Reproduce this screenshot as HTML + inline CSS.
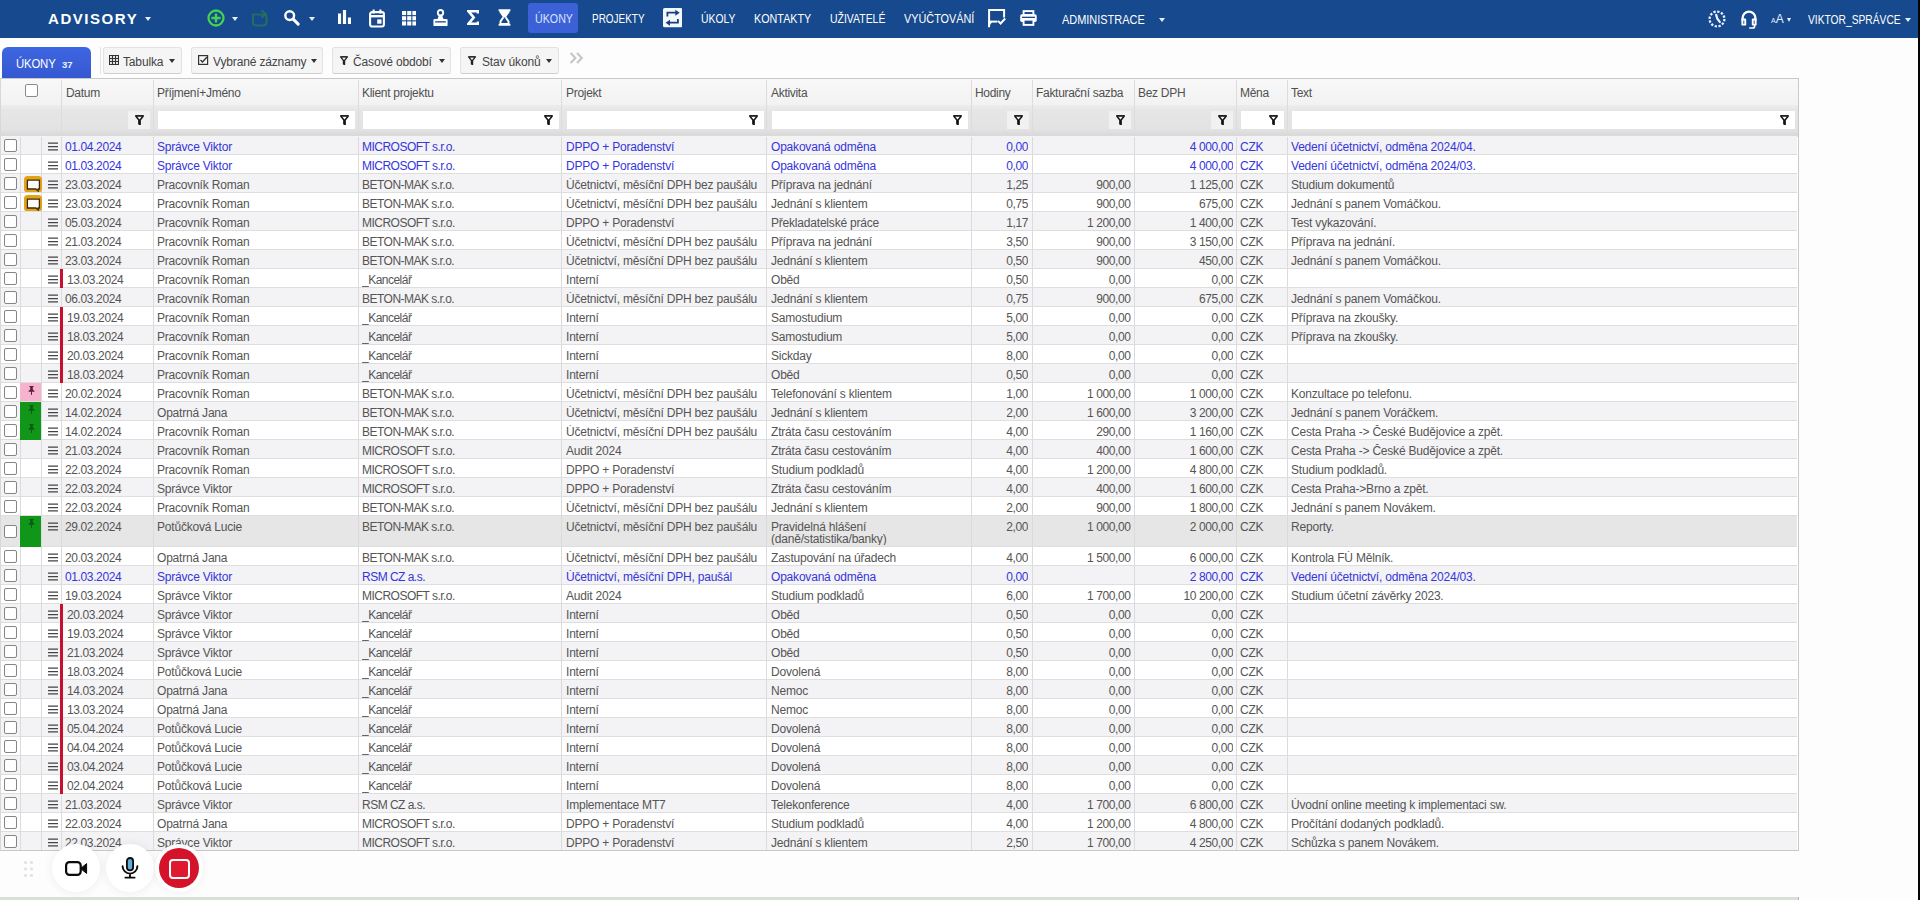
<!DOCTYPE html>
<html lang="cs"><head><meta charset="utf-8"><title>ÚKONY</title>
<style>
*{box-sizing:border-box;margin:0;padding:0}
html,body{width:1920px;height:900px;overflow:hidden;background:#fefdfe;font-family:"Liberation Sans",sans-serif;color:#444}
i{font-style:normal;display:block}
#nav{position:absolute;left:0;top:0;width:1918px;height:38px;background:#16498d}
#edge{position:absolute;left:1917.5px;top:0;width:2.5px;height:900px;background:#050505}
.nt{position:absolute;top:11px;color:#fff;font-size:13px;line-height:15px;white-space:nowrap;transform-origin:0 0;display:block}
.car{position:absolute;width:0;height:0;border-left:3px solid transparent;border-right:3px solid transparent;border-top:4px solid #e8eefa;top:17px}
.ic{position:absolute}
#brand{position:absolute;left:48px;top:10px;color:#fff;font-weight:bold;font-size:15px;line-height:18px;letter-spacing:1.55px}
#act{position:absolute;left:528px;top:3px;width:50px;height:30px;background:#3c61d6;border-radius:3px}
/* toolbar */
#tab{position:absolute;left:2px;top:47px;width:89px;height:32px;border-radius:6px 6px 0 0;background:linear-gradient(#3d66e0,#3558d2);color:#fff}
#tab b{position:absolute;left:13.5px;top:10px;font-weight:normal;font-size:12.5px;line-height:14px;letter-spacing:-.2px;transform:scaleX(.91);transform-origin:0 0}
#tab em{position:absolute;left:60px;top:12px;font-style:normal;font-weight:bold;font-size:9.5px;line-height:11px;color:#e6f4ff}
.btn{position:absolute;top:47px;height:27px;background:#f5f5f5;border:1px solid #e2e2e2;border-bottom-color:#cfcfcf;border-radius:3px;color:#444;font-size:12px;line-height:14px;white-space:nowrap}
.btn span{position:absolute;top:7px;letter-spacing:-.15px}
.btn .car{border-top-color:#333;top:11px}
.sep{position:absolute;top:47px;width:1px;height:27px;background:#e3e3e3}
/* grid */
#grid{position:absolute;left:0;top:78px;width:1799px;height:773px;border:1px solid #c9c9c9;border-left-color:#d8d8d8;background:#fff;overflow:hidden}
#hd1{position:absolute;left:0;top:0;width:1799px;height:26px;background:linear-gradient(#f8f8f8,#f2f2f2)}
#hd2{position:absolute;left:0;top:26px;width:1799px;height:32px;background:linear-gradient(#ededed 0,#e6e6e6 5px,#e3e3e3 24px,#d9d9d9 30px,#dedede 32px)}
.h{position:absolute;top:7px;font-size:12px;line-height:14px;color:#505050;white-space:nowrap;letter-spacing:-.3px}
.hs{position:absolute;top:1px;width:1px;height:55px;background:#dcdcdc}
.fi{position:absolute;top:32px;height:18px;background:#fff}
.fb{position:absolute;top:32px;height:18px;background:#f1f1f1}
.fw{position:absolute;top:35.5px;width:9px;height:10px}
.fn{width:9px;height:10px;display:block}
.hcb{position:absolute;left:25px;top:5px;width:13px;height:13px;border:1px solid #8a8a8a;border-radius:2px;background:#fff}
#rows{position:absolute;left:0;top:0;width:1799px}
.r{position:absolute;left:0;width:1797px;border-bottom:1px solid #dedede;font-size:12px;line-height:14px;color:#555;background:#fff}
.r.odd{background:#f3f2f4}
.r.tall{background:#e6e6e6}
.r.bl{color:#3535dc}
.c{position:absolute;top:3.5px;white-space:nowrap;overflow:hidden;letter-spacing:-.2px}
.n{letter-spacing:-.38px}
.k{letter-spacing:-.52px}
.tall .c{white-space:normal;line-height:12px;top:4.5px}
.rt{text-align:right}
.cb{position:absolute;left:4px;width:13px;height:13px;border:1px solid #858585;border-radius:2px;background:#fff}
.mn{position:absolute;left:48px;top:6px;width:10px;height:9px;display:block}
.rb{position:absolute;left:60.3px;top:0;width:2.7px;background:#c90f2e;z-index:3}
.fl{position:absolute;left:20px;top:0;width:20.7px;overflow:hidden;z-index:2}
.pin{position:absolute;left:8px;top:2.5px;width:7px;height:9px}
.cm{position:absolute;left:24.2px;top:1.5px;width:18px;height:16.5px;z-index:2}
.vl{z-index:1;position:absolute;top:58px;width:1px;height:720px;background:#dbdbdd}
/* recorder */
.rc{position:absolute;border-radius:50%;background:#fff;box-shadow:0 0 9px 2px rgba(0,0,0,.05)}
#bot{position:absolute;left:0;top:896.5px;width:1799px;height:3.5px;background:#d8e1d8;border-right:1px solid #b9b9b9}
</style></head><body>
<div id="nav">
 <div id="brand">ADVISORY</div><i class="car" style="left:145px"></i>
 <div id="act"></div>
 
 <svg class="ic" style="left:206px;top:8px" width="20" height="20" viewBox="0 0 20 20"><circle cx="10" cy="10" r="7.5" fill="none" stroke="#45d152" stroke-width="2.3"/><path d="M10 5.4v9.2M5.4 10h9.2" stroke="#45d152" stroke-width="2.4"/></svg><i class="car" style="left:232px"></i>
 <svg class="ic" style="left:250px;top:9px;opacity:.62" width="20" height="18" viewBox="0 0 20 18"><path d="M3 5.5h10.5a3 3 0 0 1 3 3v5a3 3 0 0 1-3 3H6a3 3 0 0 1-3-3z" fill="none" stroke="#2d8448" stroke-width="2.2"/><path d="M11.5 1.4l4 3.6-4 3.6" fill="none" stroke="#2d8448" stroke-width="2.2"/></svg>
 <svg class="ic" style="left:283px;top:9px" width="17" height="17" viewBox="0 0 17 17"><circle cx="6.7" cy="6.6" r="4.4" fill="none" stroke="#fff" stroke-width="2.4"/><path d="M10.2 10.1l5 5" stroke="#fff" stroke-width="2.9" stroke-linecap="round"/></svg><i class="car" style="left:309px"></i>
 <svg class="ic" style="left:338px;top:10.4px" width="13" height="14" viewBox="0 0 13 14"><path d="M0 3.6h3.1V14H0zM4.9 0h3.2v14H4.9zM9.9 7.4H13V14H9.9z" fill="#fff"/></svg>
 <svg class="ic" style="left:368.5px;top:8.6px" width="16" height="19" viewBox="0 0 16 19"><rect x="1.1" y="3.1" width="13.8" height="14.4" rx="2" fill="none" stroke="#fff" stroke-width="2.1"/><path d="M1 7.2h14" stroke="#fff" stroke-width="2.4"/><path d="M4.6 .6v4M11.4 .6v4" stroke="#fff" stroke-width="2.1"/><rect x="8.2" y="10.4" width="4.3" height="4.3" fill="#fff"/></svg>
 <svg class="ic" style="left:401.5px;top:11px" width="14.5" height="14.5" viewBox="0 0 14.5 14.5"><g fill="#fff"><rect x="0" y="0" width="4.1" height="4.1"/><rect x="5.2" y="0" width="4.1" height="4.1"/><rect x="10.4" y="0" width="4.1" height="4.1"/><rect x="0" y="5.2" width="4.1" height="4.1"/><rect x="5.2" y="5.2" width="4.1" height="4.1"/><rect x="10.4" y="5.2" width="4.1" height="4.1"/><rect x="0" y="10.4" width="4.1" height="4.1"/><rect x="5.2" y="10.4" width="4.1" height="4.1"/><rect x="10.4" y="10.4" width="4.1" height="4.1"/></g></svg>
 <svg class="ic" style="left:433px;top:9.2px" width="15" height="17.5" viewBox="0 0 15 17.5"><circle cx="7.5" cy="3.7" r="2.7" fill="none" stroke="#fff" stroke-width="1.9"/><path d="M5.9 6.4L4.4 10.2h6.2L9.1 6.4z" fill="#fff"/><rect x="0.4" y="9.9" width="14.2" height="7.2" rx="1.2" fill="#fff"/><rect x="2.2" y="12.2" width="10.6" height="1.3" fill="#16498d"/></svg>
 <svg class="ic" style="left:466.5px;top:10px" width="12" height="15" viewBox="0 0 12 15"><path d="M11 3.4V1.3H1.6L6.7 7.5 1.6 13.7H11v-2.1" fill="none" stroke="#fff" stroke-width="2.6" stroke-linejoin="miter"/></svg>
 <svg class="ic" style="left:498px;top:9.4px" width="13" height="17" viewBox="0 0 13 17"><path d="M0.6 0.2h11.8v2H0.6zM0.6 14.8h11.8v2H0.6z" fill="#fff"/><path d="M1.6 2h9.8v1.6L7.8 8.5h-2.6L1.6 3.6z" fill="#fff"/><path d="M5.4 8.3L2.5 12.4V15h8v-2.6L7.6 8.3" fill="none" stroke="#fff" stroke-width="1.9"/></svg>
 <svg class="ic" style="left:663.1px;top:8.4px" width="19.3" height="19.3" viewBox="0 0 19.3 19.3"><rect x="0" y="0" width="19.3" height="19.3" rx="1.6" fill="#f3f8fd"/><path d="M4.4 8.4V4.7H13" fill="none" stroke="#1c3f7c" stroke-width="1.8"/><path d="M12.3 1.7l4.4 3-4.4 3z" fill="#1c3f7c"/><path d="M14.9 11V14.7H6.3" fill="none" stroke="#1c3f7c" stroke-width="1.8"/><path d="M7 11.7l-4.4 3 4.4 3z" fill="#1c3f7c"/></svg>
 <svg class="ic" style="left:987px;top:8px" width="20" height="21" viewBox="0 0 20 21"><path d="M2.1 19.2V2.1H17.1V9.6" fill="none" stroke="#fff" stroke-width="2"/><path d="M1.1 13.6H10.4" stroke="#fff" stroke-width="2"/><path d="M1.1 13.2h4.6L1.1 19.6z" fill="#fff"/><path d="M11 12.8l2.6 2.7 4.6-5" fill="none" stroke="#fff" stroke-width="1.9"/></svg>
 <svg class="ic" style="left:1020px;top:9.8px" width="17" height="16" viewBox="0 0 17 16"><rect x="3.6" y="1.1" width="9.8" height="4" fill="none" stroke="#fff" stroke-width="1.9"/><rect x="0.2" y="4.3" width="16.5" height="7.7" rx="1.7" fill="#fff"/><rect x="2" y="6.7" width="13" height="1.3" fill="#1a4685"/><rect x="3.6" y="9.7" width="9.8" height="5.2" fill="#1a4685" stroke="#fff" stroke-width="1.9"/></svg>
 <svg class="ic" style="left:1707.4px;top:9px" width="20" height="20" viewBox="0 0 20 20"><circle cx="10" cy="10" r="7.4" fill="none" stroke="#eaf3ff" stroke-width="2.3" stroke-dasharray="2.3 1.574"/><path d="M9.2 5.8Q9.6 10 12.8 13" fill="none" stroke="#eaf3ff" stroke-width="2.3" stroke-linecap="round"/></svg>
 <svg class="ic" style="left:1741px;top:9.6px" width="16" height="19" viewBox="0 0 16 19"><path d="M1.6 11V8a6.4 6.4 0 0 1 12.8 0v3" fill="none" stroke="#fff" stroke-width="2.3"/><rect x="0.4" y="8.6" width="4.8" height="7" rx="1.2" fill="#fff"/><rect x="10.8" y="8.6" width="4.8" height="7" rx="1.2" fill="#fff"/><path d="M2.8 10.5v3.4M13.2 10.5v3.4" stroke="#2a5aa0" stroke-width="1"/><path d="M13.6 15v1.2a1.8 1.8 0 0 1-1.8 1.8H8.2" fill="none" stroke="#fff" stroke-width="1.7"/></svg>

 <span class="nt" style="left:535.0px;top:11px;color:#d9e4ff;transform:scaleX(0.8220)">ÚKONY</span>
 <span class="nt" style="left:592.0px;top:11px;color:#fff;transform:scaleX(0.7663)">PROJEKTY</span>
 <span class="nt" style="left:700.8px;top:11px;color:#fff;transform:scaleX(0.7979)">ÚKOLY</span>
 <span class="nt" style="left:753.7px;top:11px;color:#fff;transform:scaleX(0.8291)">KONTAKTY</span>
 <span class="nt" style="left:829.8px;top:11px;color:#fff;transform:scaleX(0.8044)">UŽIVATELÉ</span>
 <span class="nt" style="left:904.0px;top:11px;color:#fff;transform:scaleX(0.8352)">VYÚČTOVÁNÍ</span>
 <span class="nt" style="left:1061.6px;top:12px;color:#fff;transform:scaleX(0.8419)">ADMINISTRACE</span>
 <span class="nt" style="left:1808.0px;top:12px;color:#fff;transform:scaleX(0.7887)">VIKTOR_SPRÁVCE</span>
 <i class="car" style="left:1159px;top:18px"></i>
 <span class="nt" style="left:1771px;font-size:12px;top:12px;color:#e8eefc"><span style="font-size:7px">A</span>A</span><i class="car" style="left:1787px;top:18px;border-left-width:2.5px;border-right-width:2.5px"></i>
<i class="car" style="left:1905px;top:18px"></i>
</div>
<div id="edge"></div>

<div id="tab"><b>ÚKONY</b><em>37</em></div>
<i class="sep" style="left:100px"></i>
<div class="btn" style="left:103px;width:79px"><svg class="ic" style="left:5px;top:7px" width="10" height="10" viewBox="0 0 10 10"><path d="M.5.5h9v9h-9zM.5 3.5h9M.5 6.5h9M3.5.5v9M6.5.5v9" fill="none" stroke="#333" stroke-width="1.2"/></svg><span style="left:19px">Tabulka</span><i class="car" style="left:65px"></i></div>
<div class="btn" style="left:191px;width:132px"><svg class="ic" style="left:6px;top:7px" width="11" height="10" viewBox="0 0 11 10"><rect x=".6" y=".6" width="9" height="8.8" fill="none" stroke="#333" stroke-width="1.2"/><path d="M2.5 5l2 2 4.5-5" fill="none" stroke="#333" stroke-width="1.4"/></svg><span style="left:21px">Vybrané záznamy</span><i class="car" style="left:119px"></i></div>
<div class="btn" style="left:332px;width:119px"><span class="ic" style="left:7px;top:8px;width:9px;height:9px"><svg width="8" height="9" viewBox="0 0 9 10" style="display:block"><path d="M0.2 0.9H8.8" stroke="#222" stroke-width="1.8"/><path d="M0.9 1.2L3.9 5V8.9L5.1 9.6V5L8.1 1.2" fill="none" stroke="#222" stroke-width="1.5"/><path d="M3.9 5h1.2v4H3.9z" fill="#222"/></svg></span><span style="left:20px">Časové období</span><i class="car" style="left:106px"></i></div>
<div class="btn" style="left:460px;width:99px"><span class="ic" style="left:7px;top:8px;width:9px;height:9px"><svg width="8" height="9" viewBox="0 0 9 10" style="display:block"><path d="M0.2 0.9H8.8" stroke="#222" stroke-width="1.8"/><path d="M0.9 1.2L3.9 5V8.9L5.1 9.6V5L8.1 1.2" fill="none" stroke="#222" stroke-width="1.5"/><path d="M3.9 5h1.2v4H3.9z" fill="#222"/></svg></span><span style="left:21px">Stav úkonů</span><i class="car" style="left:85px"></i></div>
<svg class="ic" style="left:569px;top:52px" width="15" height="12" viewBox="0 0 15 12"><path d="M1.6 1l4.8 5-4.8 5M8 1l4.8 5L8 11" fill="none" stroke="#c6c6c6" stroke-width="2.1"/></svg>

<div id="grid"><div style="position:absolute;left:-1px;top:-79px;width:1800px;height:900px">
 <div style="position:absolute;left:0;top:79px;width:1800px;height:58px">
  <div id="hd1"></div><div id="hd2"></div>
  <i class="hs" style="left:61px"></i><i class="hs" style="left:153px"></i><i class="hs" style="left:358px"></i><i class="hs" style="left:561px"></i><i class="hs" style="left:766px"></i><i class="hs" style="left:971px"></i><i class="hs" style="left:1032px"></i><i class="hs" style="left:1134px"></i><i class="hs" style="left:1236px"></i><i class="hs" style="left:1287px"></i>
  <i class="hcb"></i>
  <span class="h" style="left:66px">Datum</span><span class="h" style="left:157px">Příjmení+Jméno</span><span class="h" style="left:362px">Klient projektu</span><span class="h" style="left:566px">Projekt</span><span class="h" style="left:771px">Aktivita</span><span class="h" style="left:975px">Hodiny</span><span class="h" style="left:1036px">Fakturační sazba</span><span class="h" style="left:1138px">Bez DPH</span><span class="h" style="left:1240px">Měna</span><span class="h" style="left:1291px">Text</span>
  <i class="fb" style="left:128px;width:22px"></i><span class="fw" style="left:135px"><svg class="fn" viewBox="0 0 9 10"><path d="M0.2 0.9H8.8" stroke="#141414" stroke-width="1.7"/><path d="M0.9 1.2L3.9 5V8.9L5.1 9.6V5L8.1 1.2" fill="none" stroke="#141414" stroke-width="1.5" stroke-linejoin="miter"/><path d="M3.9 5h1.2v4H3.9z" fill="#141414"/></svg></span><i class="fi" style="left:158px;width:197px"></i><span class="fw" style="left:340px"><svg class="fn" viewBox="0 0 9 10"><path d="M0.2 0.9H8.8" stroke="#141414" stroke-width="1.7"/><path d="M0.9 1.2L3.9 5V8.9L5.1 9.6V5L8.1 1.2" fill="none" stroke="#141414" stroke-width="1.5" stroke-linejoin="miter"/><path d="M3.9 5h1.2v4H3.9z" fill="#141414"/></svg></span><i class="fi" style="left:363px;width:196px"></i><span class="fw" style="left:544px"><svg class="fn" viewBox="0 0 9 10"><path d="M0.2 0.9H8.8" stroke="#141414" stroke-width="1.7"/><path d="M0.9 1.2L3.9 5V8.9L5.1 9.6V5L8.1 1.2" fill="none" stroke="#141414" stroke-width="1.5" stroke-linejoin="miter"/><path d="M3.9 5h1.2v4H3.9z" fill="#141414"/></svg></span><i class="fi" style="left:567px;width:197px"></i><span class="fw" style="left:749px"><svg class="fn" viewBox="0 0 9 10"><path d="M0.2 0.9H8.8" stroke="#141414" stroke-width="1.7"/><path d="M0.9 1.2L3.9 5V8.9L5.1 9.6V5L8.1 1.2" fill="none" stroke="#141414" stroke-width="1.5" stroke-linejoin="miter"/><path d="M3.9 5h1.2v4H3.9z" fill="#141414"/></svg></span><i class="fi" style="left:772px;width:196px"></i><span class="fw" style="left:953px"><svg class="fn" viewBox="0 0 9 10"><path d="M0.2 0.9H8.8" stroke="#141414" stroke-width="1.7"/><path d="M0.9 1.2L3.9 5V8.9L5.1 9.6V5L8.1 1.2" fill="none" stroke="#141414" stroke-width="1.5" stroke-linejoin="miter"/><path d="M3.9 5h1.2v4H3.9z" fill="#141414"/></svg></span><i class="fb" style="left:1007px;width:22px"></i><span class="fw" style="left:1014px"><svg class="fn" viewBox="0 0 9 10"><path d="M0.2 0.9H8.8" stroke="#141414" stroke-width="1.7"/><path d="M0.9 1.2L3.9 5V8.9L5.1 9.6V5L8.1 1.2" fill="none" stroke="#141414" stroke-width="1.5" stroke-linejoin="miter"/><path d="M3.9 5h1.2v4H3.9z" fill="#141414"/></svg></span><i class="fb" style="left:1109px;width:22px"></i><span class="fw" style="left:1116px"><svg class="fn" viewBox="0 0 9 10"><path d="M0.2 0.9H8.8" stroke="#141414" stroke-width="1.7"/><path d="M0.9 1.2L3.9 5V8.9L5.1 9.6V5L8.1 1.2" fill="none" stroke="#141414" stroke-width="1.5" stroke-linejoin="miter"/><path d="M3.9 5h1.2v4H3.9z" fill="#141414"/></svg></span><i class="fb" style="left:1211px;width:22px"></i><span class="fw" style="left:1218px"><svg class="fn" viewBox="0 0 9 10"><path d="M0.2 0.9H8.8" stroke="#141414" stroke-width="1.7"/><path d="M0.9 1.2L3.9 5V8.9L5.1 9.6V5L8.1 1.2" fill="none" stroke="#141414" stroke-width="1.5" stroke-linejoin="miter"/><path d="M3.9 5h1.2v4H3.9z" fill="#141414"/></svg></span><i class="fi" style="left:1241px;width:43px"></i><span class="fw" style="left:1269px"><svg class="fn" viewBox="0 0 9 10"><path d="M0.2 0.9H8.8" stroke="#141414" stroke-width="1.7"/><path d="M0.9 1.2L3.9 5V8.9L5.1 9.6V5L8.1 1.2" fill="none" stroke="#141414" stroke-width="1.5" stroke-linejoin="miter"/><path d="M3.9 5h1.2v4H3.9z" fill="#141414"/></svg></span><i class="fi" style="left:1292px;width:503px"></i><span class="fw" style="left:1780px"><svg class="fn" viewBox="0 0 9 10"><path d="M0.2 0.9H8.8" stroke="#141414" stroke-width="1.7"/><path d="M0.9 1.2L3.9 5V8.9L5.1 9.6V5L8.1 1.2" fill="none" stroke="#141414" stroke-width="1.5" stroke-linejoin="miter"/><path d="M3.9 5h1.2v4H3.9z" fill="#141414"/></svg></span>
 </div>
 <div id="rows">
<div class="r bl odd" style="top:136px;height:19px"><i class="cb" style="top:3px"></i><svg class="mn" viewBox="0 0 10 9"><path d="M0 1.2h10M0 4.55h10M0 7.9h10" stroke="#444" stroke-width="1.3"/></svg><span class="c n" style="left:65px;width:86px">01.04.2024</span><span class="c" style="left:157px;width:199px">Správce Viktor</span><span class="c k" style="left:362px;width:198px">MICROSOFT s.r.o.</span><span class="c" style="left:566px;width:199px">DPPO + Poradenství</span><span class="c" style="left:771px;width:198px">Opakovaná odměna</span><span class="c rt n" style="left:971px;width:57px">0,00</span><span class="c rt n" style="left:1134px;width:99.4px">4 000,00</span><span class="c" style="left:1240px;width:45px">CZK</span><span class="c" style="left:1291px;width:505px">Vedení účetnictví, odměna 2024/04.</span></div>
<div class="r bl" style="top:155px;height:19px"><i class="cb" style="top:3px"></i><svg class="mn" viewBox="0 0 10 9"><path d="M0 1.2h10M0 4.55h10M0 7.9h10" stroke="#444" stroke-width="1.3"/></svg><span class="c n" style="left:65px;width:86px">01.03.2024</span><span class="c" style="left:157px;width:199px">Správce Viktor</span><span class="c k" style="left:362px;width:198px">MICROSOFT s.r.o.</span><span class="c" style="left:566px;width:199px">DPPO + Poradenství</span><span class="c" style="left:771px;width:198px">Opakovaná odměna</span><span class="c rt n" style="left:971px;width:57px">0,00</span><span class="c rt n" style="left:1134px;width:99.4px">4 000,00</span><span class="c" style="left:1240px;width:45px">CZK</span><span class="c" style="left:1291px;width:505px">Vedení účetnictví, odměna 2024/03.</span></div>
<div class="r odd" style="top:174px;height:19px"><i class="cb" style="top:3px"></i><svg class="cm" viewBox="0 0 18 16.5"><rect x="1.2" y="1.2" width="15.6" height="14.1" rx="2.4" fill="#e9a60f" stroke="#e4a216" stroke-width="2.4"/><path d="M3.4 4.1h12v8.9h-1.2v2l-2.3-2H3.4z" fill="#fdfdfd" stroke="#3a2c08" stroke-width="1.3" stroke-linejoin="miter"/></svg><svg class="mn" viewBox="0 0 10 9"><path d="M0 1.2h10M0 4.55h10M0 7.9h10" stroke="#444" stroke-width="1.3"/></svg><span class="c n" style="left:65px;width:86px">23.03.2024</span><span class="c" style="left:157px;width:199px">Pracovník Roman</span><span class="c k" style="left:362px;width:198px">BETON-MAK s.r.o.</span><span class="c" style="left:566px;width:199px">Účetnictví, měsíční DPH bez paušálu</span><span class="c" style="left:771px;width:198px">Příprava na jednání</span><span class="c rt n" style="left:971px;width:57px">1,25</span><span class="c rt n" style="left:1032px;width:98.6px">900,00</span><span class="c rt n" style="left:1134px;width:99.4px">1 125,00</span><span class="c" style="left:1240px;width:45px">CZK</span><span class="c" style="left:1291px;width:505px">Studium dokumentů</span></div>
<div class="r" style="top:193px;height:19px"><i class="cb" style="top:3px"></i><svg class="cm" viewBox="0 0 18 16.5"><rect x="1.2" y="1.2" width="15.6" height="14.1" rx="2.4" fill="#e9a60f" stroke="#e4a216" stroke-width="2.4"/><path d="M3.4 4.1h12v8.9h-1.2v2l-2.3-2H3.4z" fill="#fdfdfd" stroke="#3a2c08" stroke-width="1.3" stroke-linejoin="miter"/></svg><svg class="mn" viewBox="0 0 10 9"><path d="M0 1.2h10M0 4.55h10M0 7.9h10" stroke="#444" stroke-width="1.3"/></svg><span class="c n" style="left:65px;width:86px">23.03.2024</span><span class="c" style="left:157px;width:199px">Pracovník Roman</span><span class="c k" style="left:362px;width:198px">BETON-MAK s.r.o.</span><span class="c" style="left:566px;width:199px">Účetnictví, měsíční DPH bez paušálu</span><span class="c" style="left:771px;width:198px">Jednání s klientem</span><span class="c rt n" style="left:971px;width:57px">0,75</span><span class="c rt n" style="left:1032px;width:98.6px">900,00</span><span class="c rt n" style="left:1134px;width:99.4px">675,00</span><span class="c" style="left:1240px;width:45px">CZK</span><span class="c" style="left:1291px;width:505px">Jednání s panem Vomáčkou.</span></div>
<div class="r odd" style="top:212px;height:19px"><i class="cb" style="top:3px"></i><svg class="mn" viewBox="0 0 10 9"><path d="M0 1.2h10M0 4.55h10M0 7.9h10" stroke="#444" stroke-width="1.3"/></svg><span class="c n" style="left:65px;width:86px">05.03.2024</span><span class="c" style="left:157px;width:199px">Pracovník Roman</span><span class="c k" style="left:362px;width:198px">MICROSOFT s.r.o.</span><span class="c" style="left:566px;width:199px">DPPO + Poradenství</span><span class="c" style="left:771px;width:198px">Překladatelské práce</span><span class="c rt n" style="left:971px;width:57px">1,17</span><span class="c rt n" style="left:1032px;width:98.6px">1 200,00</span><span class="c rt n" style="left:1134px;width:99.4px">1 400,00</span><span class="c" style="left:1240px;width:45px">CZK</span><span class="c" style="left:1291px;width:505px">Test vykazování.</span></div>
<div class="r" style="top:231px;height:19px"><i class="cb" style="top:3px"></i><svg class="mn" viewBox="0 0 10 9"><path d="M0 1.2h10M0 4.55h10M0 7.9h10" stroke="#444" stroke-width="1.3"/></svg><span class="c n" style="left:65px;width:86px">21.03.2024</span><span class="c" style="left:157px;width:199px">Pracovník Roman</span><span class="c k" style="left:362px;width:198px">BETON-MAK s.r.o.</span><span class="c" style="left:566px;width:199px">Účetnictví, měsíční DPH bez paušálu</span><span class="c" style="left:771px;width:198px">Příprava na jednání</span><span class="c rt n" style="left:971px;width:57px">3,50</span><span class="c rt n" style="left:1032px;width:98.6px">900,00</span><span class="c rt n" style="left:1134px;width:99.4px">3 150,00</span><span class="c" style="left:1240px;width:45px">CZK</span><span class="c" style="left:1291px;width:505px">Příprava na jednání.</span></div>
<div class="r odd" style="top:250px;height:19px"><i class="cb" style="top:3px"></i><svg class="mn" viewBox="0 0 10 9"><path d="M0 1.2h10M0 4.55h10M0 7.9h10" stroke="#444" stroke-width="1.3"/></svg><span class="c n" style="left:65px;width:86px">23.03.2024</span><span class="c" style="left:157px;width:199px">Pracovník Roman</span><span class="c k" style="left:362px;width:198px">BETON-MAK s.r.o.</span><span class="c" style="left:566px;width:199px">Účetnictví, měsíční DPH bez paušálu</span><span class="c" style="left:771px;width:198px">Jednání s klientem</span><span class="c rt n" style="left:971px;width:57px">0,50</span><span class="c rt n" style="left:1032px;width:98.6px">900,00</span><span class="c rt n" style="left:1134px;width:99.4px">450,00</span><span class="c" style="left:1240px;width:45px">CZK</span><span class="c" style="left:1291px;width:505px">Jednání s panem Vomáčkou.</span></div>
<div class="r" style="top:269px;height:19px"><i class="cb" style="top:3px"></i><svg class="mn" viewBox="0 0 10 9"><path d="M0 1.2h10M0 4.55h10M0 7.9h10" stroke="#444" stroke-width="1.3"/></svg><span class="rb" style="height:19px"></span><span class="c n" style="left:67px;width:86px">13.03.2024</span><span class="c" style="left:157px;width:199px">Pracovník Roman</span><span class="c k" style="left:362px;width:198px">_Kancelář</span><span class="c" style="left:566px;width:199px">Interní</span><span class="c" style="left:771px;width:198px">Oběd</span><span class="c rt n" style="left:971px;width:57px">0,50</span><span class="c rt n" style="left:1032px;width:98.6px">0,00</span><span class="c rt n" style="left:1134px;width:99.4px">0,00</span><span class="c" style="left:1240px;width:45px">CZK</span></div>
<div class="r odd" style="top:288px;height:19px"><i class="cb" style="top:3px"></i><svg class="mn" viewBox="0 0 10 9"><path d="M0 1.2h10M0 4.55h10M0 7.9h10" stroke="#444" stroke-width="1.3"/></svg><span class="c n" style="left:65px;width:86px">06.03.2024</span><span class="c" style="left:157px;width:199px">Pracovník Roman</span><span class="c k" style="left:362px;width:198px">BETON-MAK s.r.o.</span><span class="c" style="left:566px;width:199px">Účetnictví, měsíční DPH bez paušálu</span><span class="c" style="left:771px;width:198px">Jednání s klientem</span><span class="c rt n" style="left:971px;width:57px">0,75</span><span class="c rt n" style="left:1032px;width:98.6px">900,00</span><span class="c rt n" style="left:1134px;width:99.4px">675,00</span><span class="c" style="left:1240px;width:45px">CZK</span><span class="c" style="left:1291px;width:505px">Jednání s panem Vomáčkou.</span></div>
<div class="r" style="top:307px;height:19px"><i class="cb" style="top:3px"></i><svg class="mn" viewBox="0 0 10 9"><path d="M0 1.2h10M0 4.55h10M0 7.9h10" stroke="#444" stroke-width="1.3"/></svg><span class="rb" style="height:19px"></span><span class="c n" style="left:67px;width:86px">19.03.2024</span><span class="c" style="left:157px;width:199px">Pracovník Roman</span><span class="c k" style="left:362px;width:198px">_Kancelář</span><span class="c" style="left:566px;width:199px">Interní</span><span class="c" style="left:771px;width:198px">Samostudium</span><span class="c rt n" style="left:971px;width:57px">5,00</span><span class="c rt n" style="left:1032px;width:98.6px">0,00</span><span class="c rt n" style="left:1134px;width:99.4px">0,00</span><span class="c" style="left:1240px;width:45px">CZK</span><span class="c" style="left:1291px;width:505px">Příprava na zkoušky.</span></div>
<div class="r odd" style="top:326px;height:19px"><i class="cb" style="top:3px"></i><svg class="mn" viewBox="0 0 10 9"><path d="M0 1.2h10M0 4.55h10M0 7.9h10" stroke="#444" stroke-width="1.3"/></svg><span class="rb" style="height:19px"></span><span class="c n" style="left:67px;width:86px">18.03.2024</span><span class="c" style="left:157px;width:199px">Pracovník Roman</span><span class="c k" style="left:362px;width:198px">_Kancelář</span><span class="c" style="left:566px;width:199px">Interní</span><span class="c" style="left:771px;width:198px">Samostudium</span><span class="c rt n" style="left:971px;width:57px">5,00</span><span class="c rt n" style="left:1032px;width:98.6px">0,00</span><span class="c rt n" style="left:1134px;width:99.4px">0,00</span><span class="c" style="left:1240px;width:45px">CZK</span><span class="c" style="left:1291px;width:505px">Příprava na zkoušky.</span></div>
<div class="r" style="top:345px;height:19px"><i class="cb" style="top:3px"></i><svg class="mn" viewBox="0 0 10 9"><path d="M0 1.2h10M0 4.55h10M0 7.9h10" stroke="#444" stroke-width="1.3"/></svg><span class="rb" style="height:19px"></span><span class="c n" style="left:67px;width:86px">20.03.2024</span><span class="c" style="left:157px;width:199px">Pracovník Roman</span><span class="c k" style="left:362px;width:198px">_Kancelář</span><span class="c" style="left:566px;width:199px">Interní</span><span class="c" style="left:771px;width:198px">Sickday</span><span class="c rt n" style="left:971px;width:57px">8,00</span><span class="c rt n" style="left:1032px;width:98.6px">0,00</span><span class="c rt n" style="left:1134px;width:99.4px">0,00</span><span class="c" style="left:1240px;width:45px">CZK</span></div>
<div class="r odd" style="top:364px;height:19px"><i class="cb" style="top:3px"></i><svg class="mn" viewBox="0 0 10 9"><path d="M0 1.2h10M0 4.55h10M0 7.9h10" stroke="#444" stroke-width="1.3"/></svg><span class="rb" style="height:19px"></span><span class="c n" style="left:67px;width:86px">18.03.2024</span><span class="c" style="left:157px;width:199px">Pracovník Roman</span><span class="c k" style="left:362px;width:198px">_Kancelář</span><span class="c" style="left:566px;width:199px">Interní</span><span class="c" style="left:771px;width:198px">Oběd</span><span class="c rt n" style="left:971px;width:57px">0,50</span><span class="c rt n" style="left:1032px;width:98.6px">0,00</span><span class="c rt n" style="left:1134px;width:99.4px">0,00</span><span class="c" style="left:1240px;width:45px">CZK</span></div>
<div class="r" style="top:383px;height:19px"><i class="cb" style="top:3px"></i><span class="fl" style="background:#f7b2cd;height:18px"><svg class="pin" viewBox="0 0 7 9"><path d="M1.4 0h4.2v1h-.8v2.6l1.7 1.3v.9H4v3L3.5 9 3 8.8v-3H.5v-.9l1.7-1.3V1h-.8z" fill="#5e2038"/></svg></span><svg class="mn" viewBox="0 0 10 9"><path d="M0 1.2h10M0 4.55h10M0 7.9h10" stroke="#444" stroke-width="1.3"/></svg><span class="c n" style="left:65px;width:86px">20.02.2024</span><span class="c" style="left:157px;width:199px">Pracovník Roman</span><span class="c k" style="left:362px;width:198px">BETON-MAK s.r.o.</span><span class="c" style="left:566px;width:199px">Účetnictví, měsíční DPH bez paušálu</span><span class="c" style="left:771px;width:198px">Telefonování s klientem</span><span class="c rt n" style="left:971px;width:57px">1,00</span><span class="c rt n" style="left:1032px;width:98.6px">1 000,00</span><span class="c rt n" style="left:1134px;width:99.4px">1 000,00</span><span class="c" style="left:1240px;width:45px">CZK</span><span class="c" style="left:1291px;width:505px">Konzultace po telefonu.</span></div>
<div class="r odd" style="top:402px;height:19px"><i class="cb" style="top:3px"></i><span class="fl" style="background:#109618;height:19px"><svg class="pin" viewBox="0 0 7 9"><path d="M1.4 0h4.2v1h-.8v2.6l1.7 1.3v.9H4v3L3.5 9 3 8.8v-3H.5v-.9l1.7-1.3V1h-.8z" fill="#0b5c12"/></svg></span><svg class="mn" viewBox="0 0 10 9"><path d="M0 1.2h10M0 4.55h10M0 7.9h10" stroke="#444" stroke-width="1.3"/></svg><span class="c n" style="left:65px;width:86px">14.02.2024</span><span class="c" style="left:157px;width:199px">Opatrná Jana</span><span class="c k" style="left:362px;width:198px">BETON-MAK s.r.o.</span><span class="c" style="left:566px;width:199px">Účetnictví, měsíční DPH bez paušálu</span><span class="c" style="left:771px;width:198px">Jednání s klientem</span><span class="c rt n" style="left:971px;width:57px">2,00</span><span class="c rt n" style="left:1032px;width:98.6px">1 600,00</span><span class="c rt n" style="left:1134px;width:99.4px">3 200,00</span><span class="c" style="left:1240px;width:45px">CZK</span><span class="c" style="left:1291px;width:505px">Jednání s panem Voráčkem.</span></div>
<div class="r" style="top:421px;height:19px"><i class="cb" style="top:3px"></i><span class="fl" style="background:#109618;height:19px"><svg class="pin" viewBox="0 0 7 9"><path d="M1.4 0h4.2v1h-.8v2.6l1.7 1.3v.9H4v3L3.5 9 3 8.8v-3H.5v-.9l1.7-1.3V1h-.8z" fill="#0b5c12"/></svg></span><svg class="mn" viewBox="0 0 10 9"><path d="M0 1.2h10M0 4.55h10M0 7.9h10" stroke="#444" stroke-width="1.3"/></svg><span class="c n" style="left:65px;width:86px">14.02.2024</span><span class="c" style="left:157px;width:199px">Pracovník Roman</span><span class="c k" style="left:362px;width:198px">BETON-MAK s.r.o.</span><span class="c" style="left:566px;width:199px">Účetnictví, měsíční DPH bez paušálu</span><span class="c" style="left:771px;width:198px">Ztráta času cestováním</span><span class="c rt n" style="left:971px;width:57px">4,00</span><span class="c rt n" style="left:1032px;width:98.6px">290,00</span><span class="c rt n" style="left:1134px;width:99.4px">1 160,00</span><span class="c" style="left:1240px;width:45px">CZK</span><span class="c" style="left:1291px;width:505px">Cesta Praha -> České Budějovice a zpět.</span></div>
<div class="r odd" style="top:440px;height:19px"><i class="cb" style="top:3px"></i><svg class="mn" viewBox="0 0 10 9"><path d="M0 1.2h10M0 4.55h10M0 7.9h10" stroke="#444" stroke-width="1.3"/></svg><span class="c n" style="left:65px;width:86px">21.03.2024</span><span class="c" style="left:157px;width:199px">Pracovník Roman</span><span class="c k" style="left:362px;width:198px">MICROSOFT s.r.o.</span><span class="c" style="left:566px;width:199px">Audit 2024</span><span class="c" style="left:771px;width:198px">Ztráta času cestováním</span><span class="c rt n" style="left:971px;width:57px">4,00</span><span class="c rt n" style="left:1032px;width:98.6px">400,00</span><span class="c rt n" style="left:1134px;width:99.4px">1 600,00</span><span class="c" style="left:1240px;width:45px">CZK</span><span class="c" style="left:1291px;width:505px">Cesta Praha -> České Budějovice a zpět.</span></div>
<div class="r" style="top:459px;height:19px"><i class="cb" style="top:3px"></i><svg class="mn" viewBox="0 0 10 9"><path d="M0 1.2h10M0 4.55h10M0 7.9h10" stroke="#444" stroke-width="1.3"/></svg><span class="c n" style="left:65px;width:86px">22.03.2024</span><span class="c" style="left:157px;width:199px">Pracovník Roman</span><span class="c k" style="left:362px;width:198px">MICROSOFT s.r.o.</span><span class="c" style="left:566px;width:199px">DPPO + Poradenství</span><span class="c" style="left:771px;width:198px">Studium podkladů</span><span class="c rt n" style="left:971px;width:57px">4,00</span><span class="c rt n" style="left:1032px;width:98.6px">1 200,00</span><span class="c rt n" style="left:1134px;width:99.4px">4 800,00</span><span class="c" style="left:1240px;width:45px">CZK</span><span class="c" style="left:1291px;width:505px">Studium podkladů.</span></div>
<div class="r odd" style="top:478px;height:19px"><i class="cb" style="top:3px"></i><svg class="mn" viewBox="0 0 10 9"><path d="M0 1.2h10M0 4.55h10M0 7.9h10" stroke="#444" stroke-width="1.3"/></svg><span class="c n" style="left:65px;width:86px">22.03.2024</span><span class="c" style="left:157px;width:199px">Správce Viktor</span><span class="c k" style="left:362px;width:198px">MICROSOFT s.r.o.</span><span class="c" style="left:566px;width:199px">DPPO + Poradenství</span><span class="c" style="left:771px;width:198px">Ztráta času cestováním</span><span class="c rt n" style="left:971px;width:57px">4,00</span><span class="c rt n" style="left:1032px;width:98.6px">400,00</span><span class="c rt n" style="left:1134px;width:99.4px">1 600,00</span><span class="c" style="left:1240px;width:45px">CZK</span><span class="c" style="left:1291px;width:505px">Cesta Praha->Brno a zpět.</span></div>
<div class="r" style="top:497px;height:19px"><i class="cb" style="top:3px"></i><svg class="mn" viewBox="0 0 10 9"><path d="M0 1.2h10M0 4.55h10M0 7.9h10" stroke="#444" stroke-width="1.3"/></svg><span class="c n" style="left:65px;width:86px">22.03.2024</span><span class="c" style="left:157px;width:199px">Pracovník Roman</span><span class="c k" style="left:362px;width:198px">BETON-MAK s.r.o.</span><span class="c" style="left:566px;width:199px">Účetnictví, měsíční DPH bez paušálu</span><span class="c" style="left:771px;width:198px">Jednání s klientem</span><span class="c rt n" style="left:971px;width:57px">2,00</span><span class="c rt n" style="left:1032px;width:98.6px">900,00</span><span class="c rt n" style="left:1134px;width:99.4px">1 800,00</span><span class="c" style="left:1240px;width:45px">CZK</span><span class="c" style="left:1291px;width:505px">Jednání s panem Novákem.</span></div>
<div class="r tall" style="top:516px;height:31px"><i class="cb" style="top:9px"></i><span class="fl" style="background:#109618;height:31px"><svg class="pin" viewBox="0 0 7 9"><path d="M1.4 0h4.2v1h-.8v2.6l1.7 1.3v.9H4v3L3.5 9 3 8.8v-3H.5v-.9l1.7-1.3V1h-.8z" fill="#0b5c12"/></svg></span><svg class="mn" viewBox="0 0 10 9"><path d="M0 1.2h10M0 4.55h10M0 7.9h10" stroke="#444" stroke-width="1.3"/></svg><span class="c n" style="left:65px;width:86px">29.02.2024</span><span class="c" style="left:157px;width:199px">Potůčková Lucie</span><span class="c k" style="left:362px;width:198px">BETON-MAK s.r.o.</span><span class="c" style="left:566px;width:199px">Účetnictví, měsíční DPH bez paušálu</span><span class="c" style="left:771px;width:198px">Pravidelná hlášení<br>(daně/statistika/banky)</span><span class="c rt n" style="left:971px;width:57px">2,00</span><span class="c rt n" style="left:1032px;width:98.6px">1 000,00</span><span class="c rt n" style="left:1134px;width:99.4px">2 000,00</span><span class="c" style="left:1240px;width:45px">CZK</span><span class="c" style="left:1291px;width:505px">Reporty.</span></div>
<div class="r" style="top:547px;height:19px"><i class="cb" style="top:3px"></i><svg class="mn" viewBox="0 0 10 9"><path d="M0 1.2h10M0 4.55h10M0 7.9h10" stroke="#444" stroke-width="1.3"/></svg><span class="c n" style="left:65px;width:86px">20.03.2024</span><span class="c" style="left:157px;width:199px">Opatrná Jana</span><span class="c k" style="left:362px;width:198px">BETON-MAK s.r.o.</span><span class="c" style="left:566px;width:199px">Účetnictví, měsíční DPH bez paušálu</span><span class="c" style="left:771px;width:198px">Zastupování na úřadech</span><span class="c rt n" style="left:971px;width:57px">4,00</span><span class="c rt n" style="left:1032px;width:98.6px">1 500,00</span><span class="c rt n" style="left:1134px;width:99.4px">6 000,00</span><span class="c" style="left:1240px;width:45px">CZK</span><span class="c" style="left:1291px;width:505px">Kontrola FÚ Mělník.</span></div>
<div class="r bl odd" style="top:566px;height:19px"><i class="cb" style="top:3px"></i><svg class="mn" viewBox="0 0 10 9"><path d="M0 1.2h10M0 4.55h10M0 7.9h10" stroke="#444" stroke-width="1.3"/></svg><span class="c n" style="left:65px;width:86px">01.03.2024</span><span class="c" style="left:157px;width:199px">Správce Viktor</span><span class="c k" style="left:362px;width:198px">RSM CZ a.s.</span><span class="c" style="left:566px;width:199px">Účetnictví, měsíční DPH, paušál</span><span class="c" style="left:771px;width:198px">Opakovaná odměna</span><span class="c rt n" style="left:971px;width:57px">0,00</span><span class="c rt n" style="left:1134px;width:99.4px">2 800,00</span><span class="c" style="left:1240px;width:45px">CZK</span><span class="c" style="left:1291px;width:505px">Vedení účetnictví, odměna 2024/03.</span></div>
<div class="r" style="top:585px;height:19px"><i class="cb" style="top:3px"></i><svg class="mn" viewBox="0 0 10 9"><path d="M0 1.2h10M0 4.55h10M0 7.9h10" stroke="#444" stroke-width="1.3"/></svg><span class="c n" style="left:65px;width:86px">19.03.2024</span><span class="c" style="left:157px;width:199px">Správce Viktor</span><span class="c k" style="left:362px;width:198px">MICROSOFT s.r.o.</span><span class="c" style="left:566px;width:199px">Audit 2024</span><span class="c" style="left:771px;width:198px">Studium podkladů</span><span class="c rt n" style="left:971px;width:57px">6,00</span><span class="c rt n" style="left:1032px;width:98.6px">1 700,00</span><span class="c rt n" style="left:1134px;width:99.4px">10 200,00</span><span class="c" style="left:1240px;width:45px">CZK</span><span class="c" style="left:1291px;width:505px">Studium účetní závěrky 2023.</span></div>
<div class="r odd" style="top:604px;height:19px"><i class="cb" style="top:3px"></i><svg class="mn" viewBox="0 0 10 9"><path d="M0 1.2h10M0 4.55h10M0 7.9h10" stroke="#444" stroke-width="1.3"/></svg><span class="rb" style="height:19px"></span><span class="c n" style="left:67px;width:86px">20.03.2024</span><span class="c" style="left:157px;width:199px">Správce Viktor</span><span class="c k" style="left:362px;width:198px">_Kancelář</span><span class="c" style="left:566px;width:199px">Interní</span><span class="c" style="left:771px;width:198px">Oběd</span><span class="c rt n" style="left:971px;width:57px">0,50</span><span class="c rt n" style="left:1032px;width:98.6px">0,00</span><span class="c rt n" style="left:1134px;width:99.4px">0,00</span><span class="c" style="left:1240px;width:45px">CZK</span></div>
<div class="r" style="top:623px;height:19px"><i class="cb" style="top:3px"></i><svg class="mn" viewBox="0 0 10 9"><path d="M0 1.2h10M0 4.55h10M0 7.9h10" stroke="#444" stroke-width="1.3"/></svg><span class="rb" style="height:19px"></span><span class="c n" style="left:67px;width:86px">19.03.2024</span><span class="c" style="left:157px;width:199px">Správce Viktor</span><span class="c k" style="left:362px;width:198px">_Kancelář</span><span class="c" style="left:566px;width:199px">Interní</span><span class="c" style="left:771px;width:198px">Oběd</span><span class="c rt n" style="left:971px;width:57px">0,50</span><span class="c rt n" style="left:1032px;width:98.6px">0,00</span><span class="c rt n" style="left:1134px;width:99.4px">0,00</span><span class="c" style="left:1240px;width:45px">CZK</span></div>
<div class="r odd" style="top:642px;height:19px"><i class="cb" style="top:3px"></i><svg class="mn" viewBox="0 0 10 9"><path d="M0 1.2h10M0 4.55h10M0 7.9h10" stroke="#444" stroke-width="1.3"/></svg><span class="rb" style="height:19px"></span><span class="c n" style="left:67px;width:86px">21.03.2024</span><span class="c" style="left:157px;width:199px">Správce Viktor</span><span class="c k" style="left:362px;width:198px">_Kancelář</span><span class="c" style="left:566px;width:199px">Interní</span><span class="c" style="left:771px;width:198px">Oběd</span><span class="c rt n" style="left:971px;width:57px">0,50</span><span class="c rt n" style="left:1032px;width:98.6px">0,00</span><span class="c rt n" style="left:1134px;width:99.4px">0,00</span><span class="c" style="left:1240px;width:45px">CZK</span></div>
<div class="r" style="top:661px;height:19px"><i class="cb" style="top:3px"></i><svg class="mn" viewBox="0 0 10 9"><path d="M0 1.2h10M0 4.55h10M0 7.9h10" stroke="#444" stroke-width="1.3"/></svg><span class="rb" style="height:19px"></span><span class="c n" style="left:67px;width:86px">18.03.2024</span><span class="c" style="left:157px;width:199px">Potůčková Lucie</span><span class="c k" style="left:362px;width:198px">_Kancelář</span><span class="c" style="left:566px;width:199px">Interní</span><span class="c" style="left:771px;width:198px">Dovolená</span><span class="c rt n" style="left:971px;width:57px">8,00</span><span class="c rt n" style="left:1032px;width:98.6px">0,00</span><span class="c rt n" style="left:1134px;width:99.4px">0,00</span><span class="c" style="left:1240px;width:45px">CZK</span></div>
<div class="r odd" style="top:680px;height:19px"><i class="cb" style="top:3px"></i><svg class="mn" viewBox="0 0 10 9"><path d="M0 1.2h10M0 4.55h10M0 7.9h10" stroke="#444" stroke-width="1.3"/></svg><span class="rb" style="height:19px"></span><span class="c n" style="left:67px;width:86px">14.03.2024</span><span class="c" style="left:157px;width:199px">Opatrná Jana</span><span class="c k" style="left:362px;width:198px">_Kancelář</span><span class="c" style="left:566px;width:199px">Interní</span><span class="c" style="left:771px;width:198px">Nemoc</span><span class="c rt n" style="left:971px;width:57px">8,00</span><span class="c rt n" style="left:1032px;width:98.6px">0,00</span><span class="c rt n" style="left:1134px;width:99.4px">0,00</span><span class="c" style="left:1240px;width:45px">CZK</span></div>
<div class="r" style="top:699px;height:19px"><i class="cb" style="top:3px"></i><svg class="mn" viewBox="0 0 10 9"><path d="M0 1.2h10M0 4.55h10M0 7.9h10" stroke="#444" stroke-width="1.3"/></svg><span class="rb" style="height:19px"></span><span class="c n" style="left:67px;width:86px">13.03.2024</span><span class="c" style="left:157px;width:199px">Opatrná Jana</span><span class="c k" style="left:362px;width:198px">_Kancelář</span><span class="c" style="left:566px;width:199px">Interní</span><span class="c" style="left:771px;width:198px">Nemoc</span><span class="c rt n" style="left:971px;width:57px">8,00</span><span class="c rt n" style="left:1032px;width:98.6px">0,00</span><span class="c rt n" style="left:1134px;width:99.4px">0,00</span><span class="c" style="left:1240px;width:45px">CZK</span></div>
<div class="r odd" style="top:718px;height:19px"><i class="cb" style="top:3px"></i><svg class="mn" viewBox="0 0 10 9"><path d="M0 1.2h10M0 4.55h10M0 7.9h10" stroke="#444" stroke-width="1.3"/></svg><span class="rb" style="height:19px"></span><span class="c n" style="left:67px;width:86px">05.04.2024</span><span class="c" style="left:157px;width:199px">Potůčková Lucie</span><span class="c k" style="left:362px;width:198px">_Kancelář</span><span class="c" style="left:566px;width:199px">Interní</span><span class="c" style="left:771px;width:198px">Dovolená</span><span class="c rt n" style="left:971px;width:57px">8,00</span><span class="c rt n" style="left:1032px;width:98.6px">0,00</span><span class="c rt n" style="left:1134px;width:99.4px">0,00</span><span class="c" style="left:1240px;width:45px">CZK</span></div>
<div class="r" style="top:737px;height:19px"><i class="cb" style="top:3px"></i><svg class="mn" viewBox="0 0 10 9"><path d="M0 1.2h10M0 4.55h10M0 7.9h10" stroke="#444" stroke-width="1.3"/></svg><span class="rb" style="height:19px"></span><span class="c n" style="left:67px;width:86px">04.04.2024</span><span class="c" style="left:157px;width:199px">Potůčková Lucie</span><span class="c k" style="left:362px;width:198px">_Kancelář</span><span class="c" style="left:566px;width:199px">Interní</span><span class="c" style="left:771px;width:198px">Dovolená</span><span class="c rt n" style="left:971px;width:57px">8,00</span><span class="c rt n" style="left:1032px;width:98.6px">0,00</span><span class="c rt n" style="left:1134px;width:99.4px">0,00</span><span class="c" style="left:1240px;width:45px">CZK</span></div>
<div class="r odd" style="top:756px;height:19px"><i class="cb" style="top:3px"></i><svg class="mn" viewBox="0 0 10 9"><path d="M0 1.2h10M0 4.55h10M0 7.9h10" stroke="#444" stroke-width="1.3"/></svg><span class="rb" style="height:19px"></span><span class="c n" style="left:67px;width:86px">03.04.2024</span><span class="c" style="left:157px;width:199px">Potůčková Lucie</span><span class="c k" style="left:362px;width:198px">_Kancelář</span><span class="c" style="left:566px;width:199px">Interní</span><span class="c" style="left:771px;width:198px">Dovolená</span><span class="c rt n" style="left:971px;width:57px">8,00</span><span class="c rt n" style="left:1032px;width:98.6px">0,00</span><span class="c rt n" style="left:1134px;width:99.4px">0,00</span><span class="c" style="left:1240px;width:45px">CZK</span></div>
<div class="r" style="top:775px;height:19px"><i class="cb" style="top:3px"></i><svg class="mn" viewBox="0 0 10 9"><path d="M0 1.2h10M0 4.55h10M0 7.9h10" stroke="#444" stroke-width="1.3"/></svg><span class="rb" style="height:19px"></span><span class="c n" style="left:67px;width:86px">02.04.2024</span><span class="c" style="left:157px;width:199px">Potůčková Lucie</span><span class="c k" style="left:362px;width:198px">_Kancelář</span><span class="c" style="left:566px;width:199px">Interní</span><span class="c" style="left:771px;width:198px">Dovolená</span><span class="c rt n" style="left:971px;width:57px">8,00</span><span class="c rt n" style="left:1032px;width:98.6px">0,00</span><span class="c rt n" style="left:1134px;width:99.4px">0,00</span><span class="c" style="left:1240px;width:45px">CZK</span></div>
<div class="r odd" style="top:794px;height:19px"><i class="cb" style="top:3px"></i><svg class="mn" viewBox="0 0 10 9"><path d="M0 1.2h10M0 4.55h10M0 7.9h10" stroke="#444" stroke-width="1.3"/></svg><span class="c n" style="left:65px;width:86px">21.03.2024</span><span class="c" style="left:157px;width:199px">Správce Viktor</span><span class="c k" style="left:362px;width:198px">RSM CZ a.s.</span><span class="c" style="left:566px;width:199px">Implementace MT7</span><span class="c" style="left:771px;width:198px">Telekonference</span><span class="c rt n" style="left:971px;width:57px">4,00</span><span class="c rt n" style="left:1032px;width:98.6px">1 700,00</span><span class="c rt n" style="left:1134px;width:99.4px">6 800,00</span><span class="c" style="left:1240px;width:45px">CZK</span><span class="c" style="left:1291px;width:505px">Úvodní online meeting k implementaci sw.</span></div>
<div class="r" style="top:813px;height:19px"><i class="cb" style="top:3px"></i><svg class="mn" viewBox="0 0 10 9"><path d="M0 1.2h10M0 4.55h10M0 7.9h10" stroke="#444" stroke-width="1.3"/></svg><span class="c n" style="left:65px;width:86px">22.03.2024</span><span class="c" style="left:157px;width:199px">Opatrná Jana</span><span class="c k" style="left:362px;width:198px">MICROSOFT s.r.o.</span><span class="c" style="left:566px;width:199px">DPPO + Poradenství</span><span class="c" style="left:771px;width:198px">Studium podkladů</span><span class="c rt n" style="left:971px;width:57px">4,00</span><span class="c rt n" style="left:1032px;width:98.6px">1 200,00</span><span class="c rt n" style="left:1134px;width:99.4px">4 800,00</span><span class="c" style="left:1240px;width:45px">CZK</span><span class="c" style="left:1291px;width:505px">Pročítání dodaných podkladů.</span></div>
<div class="r odd" style="top:832px;height:19px"><i class="cb" style="top:3px"></i><svg class="mn" viewBox="0 0 10 9"><path d="M0 1.2h10M0 4.55h10M0 7.9h10" stroke="#444" stroke-width="1.3"/></svg><span class="c n" style="left:65px;width:86px">22.03.2024</span><span class="c" style="left:157px;width:199px">Správce Viktor</span><span class="c k" style="left:362px;width:198px">MICROSOFT s.r.o.</span><span class="c" style="left:566px;width:199px">DPPO + Poradenství</span><span class="c" style="left:771px;width:198px">Jednání s klientem</span><span class="c rt n" style="left:971px;width:57px">2,50</span><span class="c rt n" style="left:1032px;width:98.6px">1 700,00</span><span class="c rt n" style="left:1134px;width:99.4px">4 250,00</span><span class="c" style="left:1240px;width:45px">CZK</span><span class="c" style="left:1291px;width:505px">Schůzka s panem Novákem.</span></div>
 </div>
 <div style="position:absolute;left:0;top:79px;width:1800px;height:0"><i class="vl" style="left:20px"></i><i class="vl" style="left:41px"></i><i class="vl" style="left:61px"></i><i class="vl" style="left:153px"></i><i class="vl" style="left:358px"></i><i class="vl" style="left:561px"></i><i class="vl" style="left:766px"></i><i class="vl" style="left:971px"></i><i class="vl" style="left:1032px"></i><i class="vl" style="left:1134px"></i><i class="vl" style="left:1236px"></i><i class="vl" style="left:1287px"></i></div>
</div></div>

<!-- recorder -->
<svg class="ic" style="left:24px;top:861px" width="9" height="16" viewBox="0 0 9 16"><g fill="#e3e3e3"><rect x="0" y="0" width="3" height="3" rx="1"/><rect x="6" y="0" width="3" height="3" rx="1"/><rect x="0" y="6.5" width="3" height="3" rx="1"/><rect x="6" y="6.5" width="3" height="3" rx="1"/><rect x="0" y="13" width="3" height="3" rx="1"/><rect x="6" y="13" width="3" height="3" rx="1"/></g></svg>
<div class="rc" style="left:52px;top:844px;width:48px;height:48px"><svg class="ic" style="left:12px;top:16px" width="24" height="17" viewBox="0 0 24 17"><rect x="2.1" y="2.1" width="14.6" height="12.8" rx="3.4" fill="none" stroke="#0b0b0b" stroke-width="2.2"/><path d="M16.6 8.5L22.6 3.6v9.8z" fill="#0b0b0b" stroke="#0b0b0b" stroke-width="1" stroke-linejoin="round"/></svg></div>
<div class="rc" style="left:106px;top:844px;width:48px;height:48px"><svg class="ic" style="left:15px;top:13px" width="18" height="22" viewBox="0 0 18 22"><rect x="5.9" y="1" width="6.2" height="12.4" rx="3.1" fill="#62add8" stroke="#0b0b0b" stroke-width="1.8"/><path d="M1.6 9.2a7.4 7.4 0 0 0 14.8 0M9 16.8v3.4M4.4 20.6h9.2" fill="none" stroke="#0b0b0b" stroke-width="1.9" stroke-linecap="round"/></svg></div>
<div class="rc" style="left:159px;top:848px;width:40px;height:40px;background:#d4122a;box-shadow:0 0 0 4px rgba(255,255,255,.92),0 0 10px 4px rgba(0,0,0,.06)"><i style="position:absolute;left:9.5px;top:10.5px;width:21px;height:20px;border:2px solid #fff;border-radius:4px;background:#df1a30"></i></div>
<div id="bot"></div>
</body></html>
